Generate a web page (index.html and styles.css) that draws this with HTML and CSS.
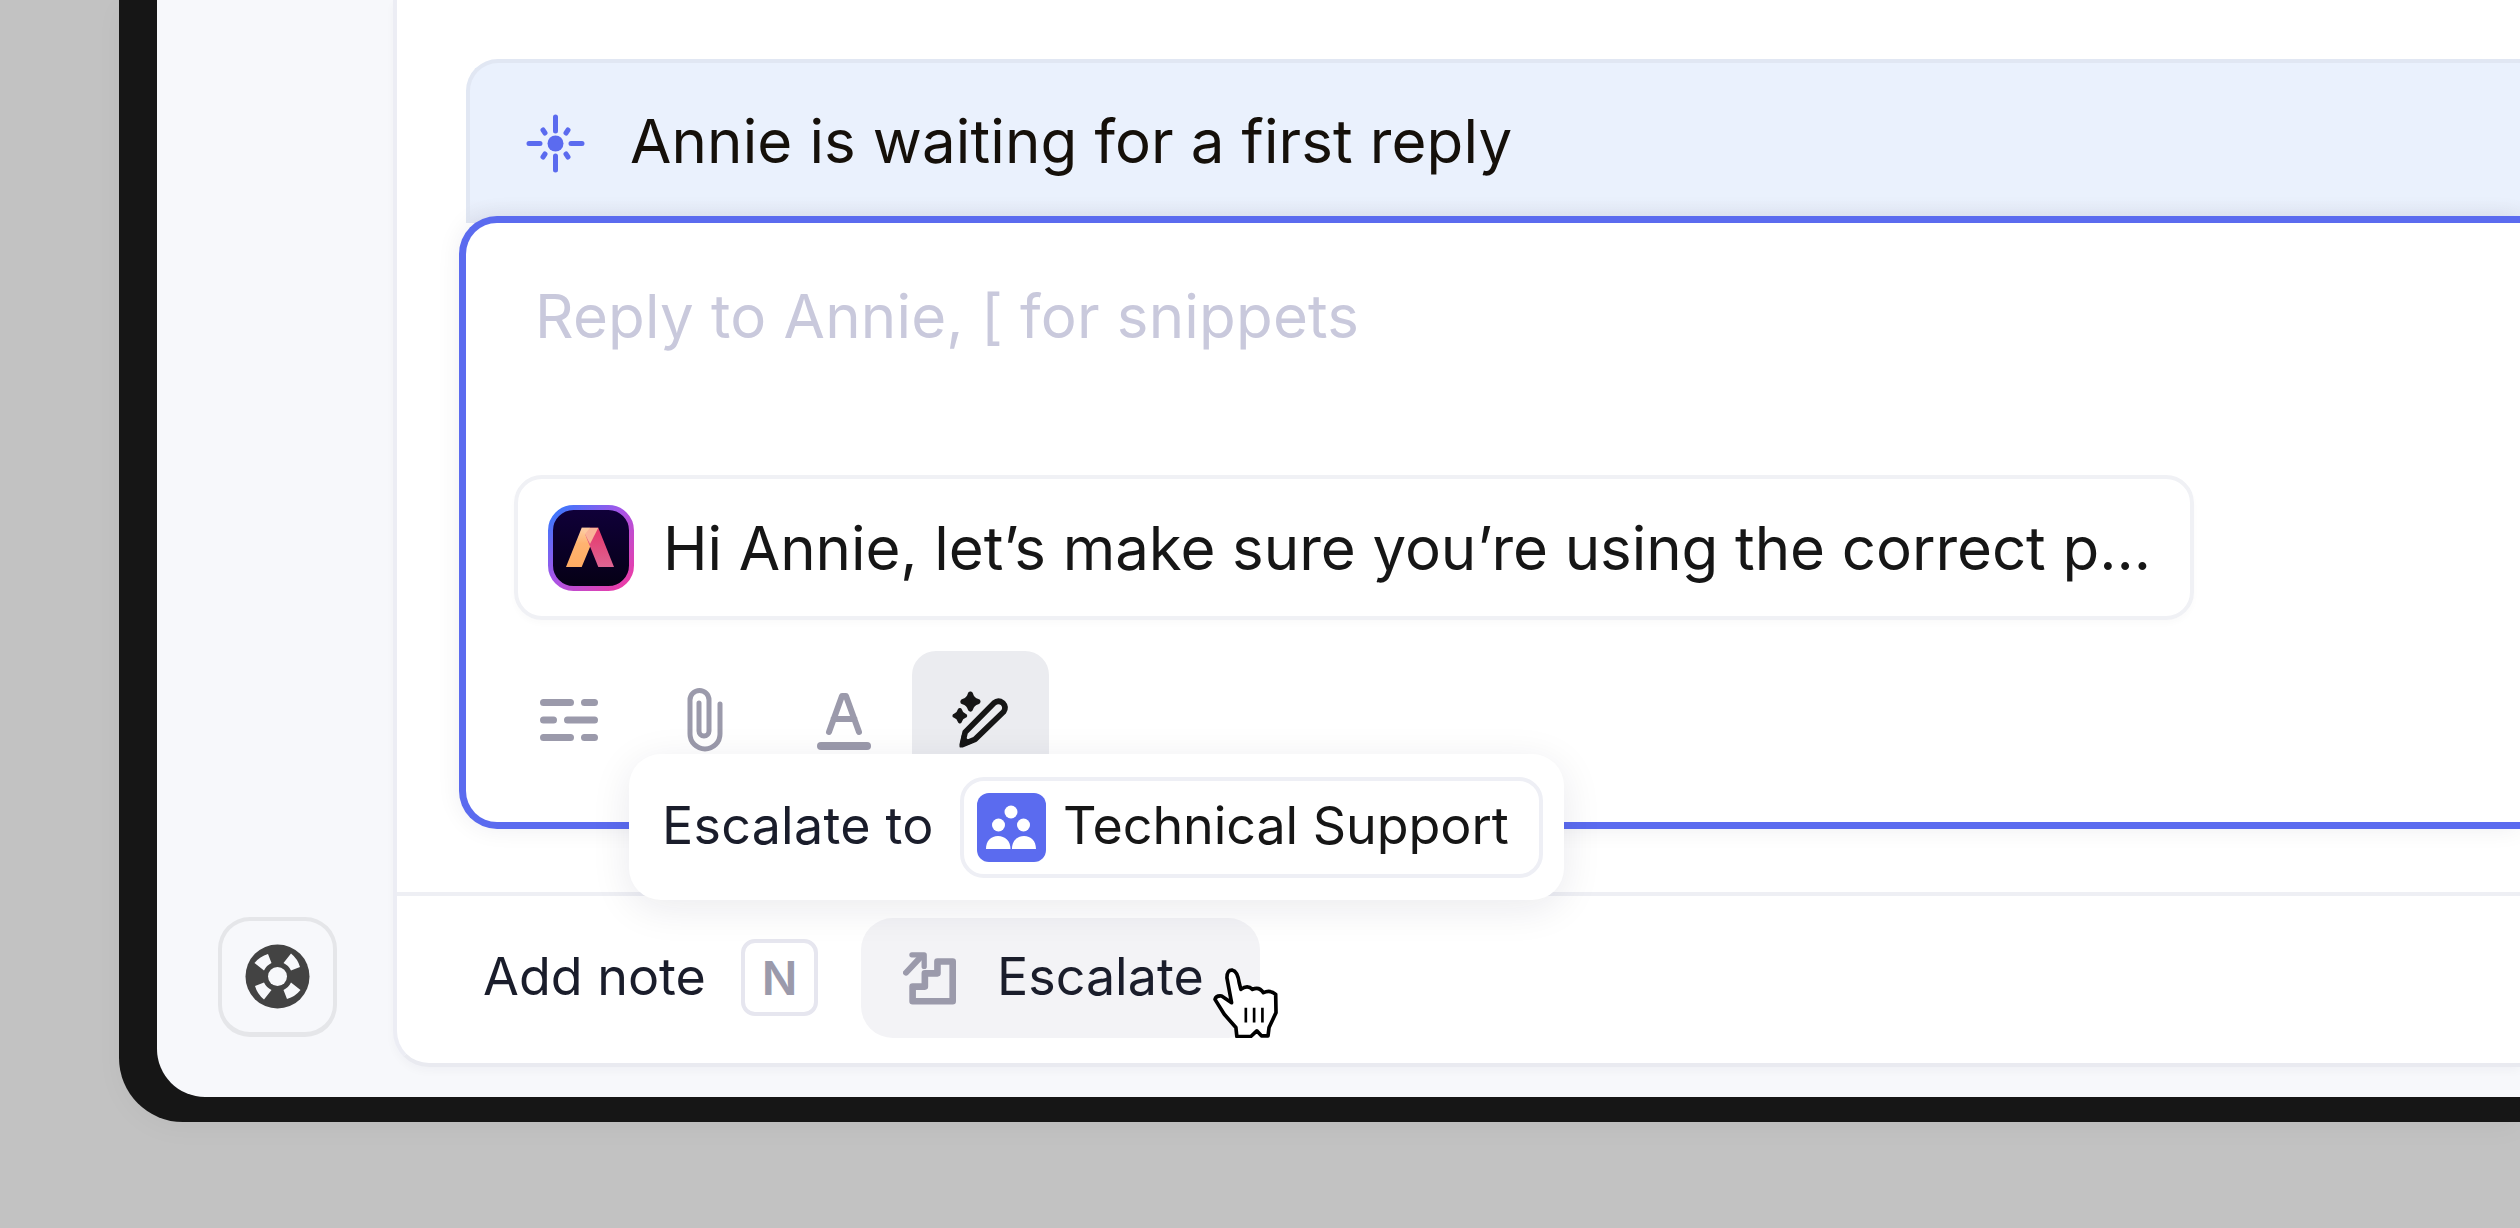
FILE: index.html
```html
<!DOCTYPE html>
<html lang="en">
<head>
<meta charset="utf-8">
<title>Inbox reply</title>
<link rel="stylesheet" href="styles.css">
</head>
<body>
<div class="frame">
  <div class="screen">
    <aside class="sidebar">
      <button class="help-btn" aria-label="Help">
        <svg width="65" height="65" viewBox="0 0 65 65"><circle cx="32.5" cy="32.5" r="32" fill="#434343"/><g fill="#f7f8fb"><circle cx="32.5" cy="32.5" r="9.500"/><path d="M9.500 19A26.500 26.500 0 0 1 23 10L26.500 19A16 16 0 0 0 19 26.500Z"/><path d="M9.500 19A26.500 26.500 0 0 1 23 10L26.500 19A16 16 0 0 0 19 26.500Z" transform="rotate(90 32.5 32.5)"/><path d="M9.500 19A26.500 26.500 0 0 1 23 10L26.500 19A16 16 0 0 0 19 26.500Z" transform="rotate(180 32.5 32.5)"/><path d="M9.500 19A26.500 26.500 0 0 1 23 10L26.500 19A16 16 0 0 0 19 26.500Z" transform="rotate(270 32.5 32.5)"/></g></svg>
      </button>
    </aside>
    <main class="main">
      <section class="conversation">
        <div class="alert">
          <svg class="alert-icon" width="59" height="59" viewBox="0 0 59 59" fill="none" stroke="#5b6bef" stroke-linecap="round" stroke-width="5"><circle cx="29.5" cy="29.5" r="8" fill="#5b6bef" stroke="none"/><path d="M29.5 3v14M29.5 42v14M3 29.5h11M45 29.5h11M17 16l2 3M42 16l-2 3M17 43l2-3M42 43l-2-3"/></svg>
          <span class="alert-text">Annie is waiting for a first reply</span>
        </div>
        <div class="composer">
          <div class="placeholder">Reply to Annie, [ for snippets</div>
          <div class="suggestion">
            <svg class="logo" width="86" height="86" viewBox="0 0 86 86">
              <defs>
                <linearGradient id="lb" x1="0" y1="0" x2="1" y2="1"><stop offset="0" stop-color="#2f7bff"/><stop offset=".45" stop-color="#a655e8"/><stop offset="1" stop-color="#f23aa0"/></linearGradient>
                <linearGradient id="ld" x1="0" y1="0" x2="0" y2="1"><stop offset="0" stop-color="#10003a"/><stop offset="1" stop-color="#050014"/></linearGradient>
                <linearGradient id="ll" x1="0" y1="0" x2="0" y2="1"><stop offset="0" stop-color="#fdcfa6"/><stop offset=".4" stop-color="#ffb370"/><stop offset="1" stop-color="#ffab63"/></linearGradient>
                <linearGradient id="lr" x1="0" y1="0" x2="0" y2="1"><stop offset="0" stop-color="#e7356a"/><stop offset="1" stop-color="#dd6492"/></linearGradient>
              </defs>
              <rect x="2.5" y="2.5" width="81" height="81" rx="23" fill="url(#ld)" stroke="url(#lb)" stroke-width="5"/>
              <polygon points="18,62 33.7,22.7 42,22.7 50,43 42,42 33.7,62" fill="url(#ll)"/>
              <polygon points="50.3,22.7 66,62 50.3,62 37,29 42,22.7" fill="url(#lr)"/>
              <polygon points="33.7,22.7 50.3,22.7 42,39" fill="#fdc9a0" opacity=".85"/>
            </svg>
            <span>Hi Annie, let’s make sure you’re using the correct p...</span>
          </div>
          <div class="toolbar">
            <button class="tool" aria-label="Formatting">
              <svg width="58" height="42" viewBox="0 0 58 42" fill="none" stroke="#9b9aab" stroke-width="7" stroke-linecap="round"><path d="M3.5 3.5h27M44.500 3.500h10M3.500 21h10M27.500 21h27M3.500 38.500h27M44.500 38.500h10"/></svg>
            </button>
            <button class="tool" aria-label="Attach">
              <svg width="36" height="65" viewBox="0 0 36 65" fill="none" stroke="#9b9aab" stroke-width="5" stroke-linecap="round"><path d="M33 16v30a15 15 0 0 1-30 0V12a9.500 9.500 0 0 1 19 0v31a5 5 0 0 1-10 0V15"/></svg>
            </button>
            <button class="tool tool-text" aria-label="Text style">
              <svg width="54" height="58" viewBox="0 0 54 58" fill="none" stroke="#9b9aab" stroke-linecap="round" stroke-linejoin="round"><path d="M12 40 25 4h4l13 36M16.500 27h21" stroke-width="6"/><path d="M4 54h46" stroke-width="8"/></svg>
            </button>
            <button class="tool tool-active" aria-label="AI compose">
              <svg width="60" height="60" viewBox="38 38 170 170" fill="#161616" stroke="#161616" stroke-linejoin="round"><path d="M93 47Q97 64 114 68 97 72 93 89 89 72 72 68 89 64 93 47Z" stroke-width="15"/><path d="M63 92Q66 105 78 108 66 111 63 124 60 111 48 108 60 105 63 92Z" stroke-width="12"/><path d="M70 190 78 155 160 72Q172 62 185 72 196 84 187 97L106 175Z" fill="none" stroke-width="16"/><path d="M64 196 70 165 95 185Z" stroke-width="4"/></svg>
            </button>
          </div>
        </div>
      </section>
      <footer class="actions">
        <span class="action-label">Add note</span>
        <kbd class="key">N</kbd>
        <button class="escalate">
          <svg width="53" height="54" viewBox="38 30 160 162" fill="none" stroke="#9b9aab" stroke-linejoin="round" stroke-linecap="round"><path d="M67 181V137H104V97H142V61H188V181Z" stroke-width="20"/><path d="M47 95 94 45" stroke-width="18"/><path d="M65 41H102V76" stroke-width="16"/></svg>
          <span class="lifted">Escalate</span>
        </button>
      </footer>
      <div class="popover">
        <span class="popover-label">Escalate to</span>
        <div class="chip">
          <svg width="69" height="69" viewBox="0 0 69 69"><rect width="69" height="69" rx="12" fill="#5b6bef"/><g fill="#fff"><circle cx="34" cy="19" r="6.500"/><circle cx="21.500" cy="32" r="6.500"/><circle cx="46.500" cy="32" r="6.500"/><path d="M9 56c0-8 5-13 12-13s12.500 5 12.500 13zM35 56c0-8 5-13 12-13s12 5 12 13z"/></g></svg>
          <span class="lifted">Technical Support</span>
        </div>
      </div>
      <svg class="cursor" width="65" height="70" viewBox="66 86 196 210"><path d="M72 180Q75 168 92 170L122 190 108 115Q108 90 125 92 140 95 145 130L150 150Q170 135 185 150 205 140 218 160 238 150 255 165L256 220 235 265 232 290H212L198 275 180 292H138L135 265 100 225Z" fill="#fff" stroke="#000" stroke-width="11" stroke-linejoin="round"/><path d="M165 205v45M190 205v45M215 205v45" stroke="#000" stroke-width="8"/></svg>
    </main>
  </div>
</div>
</body>
</html>
```

FILE: styles.css
```css
* { box-sizing: border-box; }
html, body { margin: 0; height: 100%; }
body {
  background: #c2c2c2;
  font-family: Inter, "Liberation Sans", sans-serif;
  overflow: hidden;
  padding-left: 119px;
  height: 1228px;
}
button { font: inherit; border: 0; background: none; padding: 0; margin: 0; color: inherit; }
.frame {
  width: 2401px;
  height: 1122px;
  background: #161616;
  padding: 0 0 25px 38px;
  border-radius: 0 0 0 64px;
  box-shadow: 0 6px 30px rgba(0,0,0,.03);
  overflow: hidden;
}
.screen {
  display: flex;
  height: 100%;
  background: #f7f8fb;
  border-radius: 0 0 0 48px;
}
.sidebar {
  width: 236px;
  flex: none;
  display: flex;
  flex-direction: column;
  justify-content: flex-end;
  align-items: center;
  padding: 0 0 60px 5px;
}
.help-btn {
  width: 119px;
  height: 120px;
  border: 4px solid #e5e6e9;
  border-bottom-width: 5px;
  border-radius: 32px;
  display: flex;
  align-items: center;
  justify-content: center;
}
.main {
  position: relative;
  flex: 1;
  height: 1067px;
  background: #fff;
  border-left: 4px solid #ecedf4;
  border-bottom: 4px solid #e9eaf0;
  border-radius: 0 0 0 36px;
  box-shadow: 0 4px 10px rgba(20,20,60,.03);
  display: flex;
  flex-direction: column;
  overflow: hidden;
}
.conversation {
  flex: 1;
  padding: 59px 0 0 69px;
  border-bottom: 4px solid #eeeff4;
}
.alert {
  height: 164px;
  display: flex;
  align-items: center;
  gap: 45px;
  padding-left: 56px;
  border: 4px solid #e1e7f3;
  border-bottom: 0;
  border-right: 0;
  border-radius: 32px 0 0 0;
  background: linear-gradient(#eaf1fd 85%, #e3e8f4);
  font-size: 60px;
  letter-spacing: .12px;
  color: #15100a;
  white-space: nowrap;
}
.alert-icon { flex: none; }
.alert-text { padding-bottom: 4px; }
.composer {
  position: relative;
  margin: -7px 0 0 -7px;
  height: 613px;
  background: #fff;
  border: 7px solid #5b6bef;
  border-right: 0;
  border-radius: 38px 0 0 38px;
  box-shadow: 0 0 24px rgba(20,20,60,.07);
  padding-left: 48px;
}
.placeholder {
  padding: 58px 0 0 21px;
  font-size: 60px;
  letter-spacing: .2px;
  line-height: 70px;
  color: #c9c9dc;
  white-space: nowrap;
}
.suggestion {
  margin-top: 124px;
  width: 1680px;
  height: 145px;
  display: flex;
  align-items: center;
  gap: 29px;
  padding-left: 30px;
  border: 4px solid #f0f1f5;
  border-radius: 28px;
  box-shadow: 0 4px 6px rgba(20,20,60,.02);
  font-size: 60px;
  letter-spacing: -.06px;
  color: #161616;
  white-space: nowrap;
}
.logo { flex: none; }
.toolbar {
  display: flex;
  margin: 31px 0 0 -13px;
}
.tool {
  width: 136px;
  height: 138px;
  border-radius: 24px;
  display: flex;
  align-items: center;
  justify-content: center;
}
.tool-text { padding: 1px 0 0 5px; }
.tool-active { width: 137px; background: #ebecf0; margin-left: 3px; padding-top: 2px; }
.actions {
  flex: none;
  height: 167px;
  display: flex;
  align-items: center;
  padding: 0 0 4px 86px;
  color: #1a1d2b;
  font-size: 52px;
}
.action-label { width: 258px; white-space: nowrap; padding-bottom: 3px; }
.lifted { padding-bottom: 3px; }
.key {
  width: 77px;
  height: 77px;
  border: 4px solid #e6e6ef;
  border-radius: 14px;
  display: flex;
  align-items: center;
  justify-content: center;
  font: 600 47px Inter, "Liberation Sans", sans-serif;
  color: #9b9aab;
}
.escalate {
  margin-left: 43px;
  width: 399px;
  height: 120px;
  border-radius: 32px;
  background: #f3f3f6;
  display: flex;
  align-items: center;
  gap: 41px;
  padding-left: 42px;
  font-size: 52px;
  color: #1a1d2b;
}
.popover {
  position: absolute;
  left: 232px;
  top: 754px;
  width: 935px;
  height: 146px;
  display: flex;
  align-items: center;
  justify-content: space-between;
  padding: 0 21px 0 33px;
  background: #fff;
  border-radius: 32px;
  box-shadow: 0 8px 40px rgba(20,20,60,.09);
  font-size: 52px;
  color: #1a1d2b;
  white-space: nowrap;
}
.popover-label { letter-spacing: .25px; padding-bottom: 3px; }
.chip {
  width: 583px;
  height: 101px;
  border: 4px solid #eeeff5;
  border-radius: 24px;
  display: flex;
  align-items: center;
  gap: 17px;
  padding-left: 13px;
  color: #161616;
  letter-spacing: -.05px;
}
.cursor {
  position: absolute;
  left: 816px;
  top: 968px;
}
```
